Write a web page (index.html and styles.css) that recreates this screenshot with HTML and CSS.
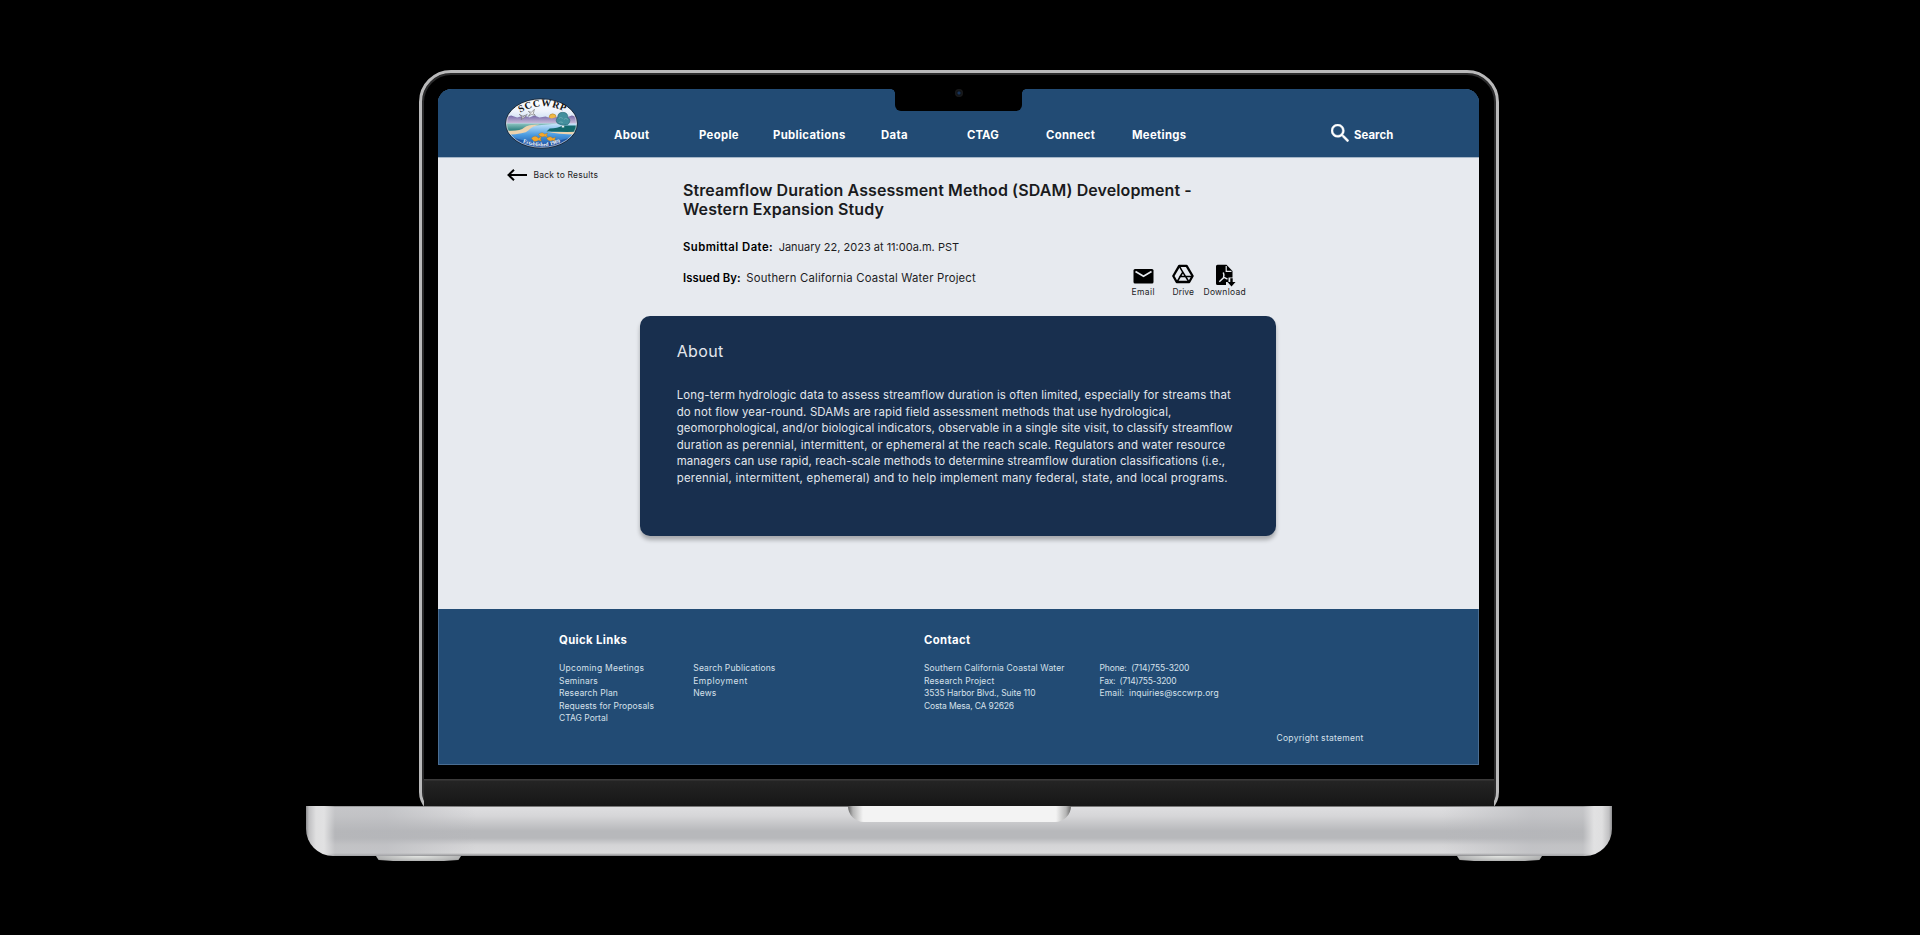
FILE: index.html
```html
<!DOCTYPE html>
<html lang="en">
<head>
<meta charset="utf-8">
<title>SCCWRP – Streamflow Duration Assessment Method</title>
<link rel="stylesheet" href="styles.css">
</head>
<body>
<div class="laptop">
  <div class="lid">
    <div class="screen">
      <div class="notch"><span class="camera"></span></div>
      <header class="site-header">
        <svg class="logo" viewBox="0 0 72 50" width="73" height="51">
          <defs>
            <clipPath id="oval"><ellipse cx="36" cy="25" rx="35" ry="24"/></clipPath>
            <linearGradient id="sky" x1="0" y1="0" x2="0" y2="1"><stop offset="0" stop-color="#fff"/><stop offset=".5" stop-color="#eef3fb"/><stop offset="1" stop-color="#b9d2ee"/></linearGradient>
            <linearGradient id="hills" x1="0" y1="0" x2="0" y2="1"><stop offset="0" stop-color="#7468a6"/><stop offset="1" stop-color="#d6c9e2"/></linearGradient>
            <linearGradient id="shore" x1="0" y1="0" x2="0" y2="1"><stop offset="0" stop-color="#8cc4bf"/><stop offset="1" stop-color="#0e6a6c"/></linearGradient>
            <linearGradient id="water" x1="0" y1="0" x2="0" y2="1"><stop offset="0" stop-color="#c9e6fa"/><stop offset=".45" stop-color="#4a9be0"/><stop offset="1" stop-color="#10439b"/></linearGradient>
            <path id="arcTop" d="M15 14.500 Q37 1 62 15"/>
            <path id="arcBottom" d="M17.500 43.500 Q36 51.500 56 43"/>
          </defs>
          <g clip-path="url(#oval)">
            <rect width="72" height="26" fill="url(#sky)"/>
            <circle cx="47" cy="19" r="3.500" fill="#f0b845" stroke="#a9802c" stroke-width=".5"/>
            <path d="M0 19 L6 17 12 19 19 17 24 19 29 17 34 19 40 18 46 20 53 18 60 19 66 17 72 19 V26 H0Z" fill="url(#hills)"/>
            <rect y="25" width="72" height="25" fill="url(#water)"/>
            <path d="M0 25 H52 L31 27 Q24 28 20 31 Q16 34 0 34Z" fill="url(#shore)"/>
            <path d="M0 32 Q15 33 19 29 Q22 26 34 26 Q26 28 23 32 Q19 36 0 36Z" fill="#ecd2ad"/>
            <path d="M72 27 H57 Q52 30 44 30 L41 33 Q52 33 72 34Z" fill="#12686c"/>
            <path d="M41 33 Q50 34 72 33 V36 Q52 36 41 33Z" fill="#ecd2ad"/>
            <path d="M56 24 H58.400 V29 H56Z" fill="#e4eef0"/>
            <path d="M52 25 Q49 22 52 19 Q52 14 57 14 Q62 14 62 19 Q66 22 62 26 Q57 28 52 25Z" fill="#438f9d" stroke="#276876" stroke-width=".6"/>
            <path d="M53 20q2-2 4 0m1 1q2-2 4 0m-9 3q2-1 4 0" stroke="#78b2b9" stroke-width=".7" fill="none"/>
            <path d="M14 16 L18 18 22 16 19 19 16 21 17 18.500Z M23 13 L26 14 29 11 28 15 30 17 26 16 23 18 25 15Z" fill="#eee" stroke="#555" stroke-width=".5"/>
            <path d="M0 36 Q14 42 36 45 Q58 42 72 36 V50 H0Z" fill="#0f3d86" opacity=".55"/>
            <g fill="#f3a72b" stroke="#a86d13" stroke-width=".3">
              <path d="M26 39.500 q4-4 7 0 l3-2 -1 3 1 2 -3-1 q-4 3-7-2Z"/>
              <path d="M33 35.500 q4-3 6 0 l3-1 -1 2 1 2 -3-1 q-4 2-6-2Z"/>
              <path d="M41 39.500 q4-3 6 0 l3-1 -1 2 1 2 -3-1 q-4 2-6-2Z"/>
            </g>
          </g>
          <ellipse cx="36" cy="25" rx="35.300" ry="24.300" fill="none" stroke="#1b2430" stroke-width=".9"/>
          <ellipse cx="36" cy="25" rx="34.500" ry="23.500" fill="none" stroke="#e9ecef" stroke-width=".6"/>
          <text class="logo-name"><textPath href="#arcTop">SCCWRP</textPath></text>
          <text class="logo-year"><textPath href="#arcBottom">Established 1969</textPath></text>
        </svg>
        <nav class="nav">
          <a>About</a><a>People</a><a>Publications</a><a>Data</a><a class="ls-1">CTAG</a><a>Connect</a><a>Meetings</a>
        </nav>
        <div class="search">
          <svg viewBox="3 3 17.500 17.500" width="18" height="18"><path fill="#fff" stroke="#fff" stroke-width=".4" d="M15.500 14h-.79l-.28-.27A6.471 6.471 0 0 0 16 9.500 6.500 6.500 0 1 0 9.500 16c1.610 0 3.090-.59 4.230-1.570l.27.28v.79l5 4.990L20.490 19l-4.990-5zm-6 0C7.010 14 5 11.990 5 9.500S7.010 5 9.500 5 14 7.010 14 9.500 11.990 14 9.500 14z"/></svg>
          <span>Search</span>
        </div>
      </header>

      <main class="main">
        <a class="back">
          <svg viewBox="0 0 20 12" width="20" height="12"><path d="M20 6H2M7 .8 1.500 6 7 11.200" fill="none" stroke="#000" stroke-width="2"/></svg>
          <span class="ls-2">Back to Results</span>
        </a>
        <article>
          <div class="intro">
            <h1><span class="title-line">Streamflow Duration Assessment Method (SDAM) Development -</span><span class="title-line">Western Expansion Study</span></h1>
            <div class="intro-row">
              <dl class="meta">
                <div><dt class="ls-5">Submittal Date:</dt><dd class="date">January 22, 2023 at 11:00a.m. PST</dd></div>
                <div><dt class="ls-1">Issued By:</dt><dd class="ls-2">Southern California Coastal Water Project</dd></div>
              </dl>
              <div class="actions">
                <div class="action">
                  <svg viewBox="0 0 21 23" width="21" height="23"><rect x=".5" y="5" width="20" height="14.500" rx="1.500"/><path d="M2.500 7.500 10.500 12.300 18.500 7.500" fill="none" stroke="#e7eaef" stroke-width="1.700"/></svg>
                  <span class="ls-4">Email</span>
                </div>
                <div class="action">
                  <svg viewBox="0 0 22 23" width="22" height="23" fill="none" stroke="#000"><path d="M7.200 1.800h7.400l6 10.200-3.400 6H4.700l-3.400-6z" stroke-width="2.300" stroke-linejoin="round"/><path d="M7.200 2 10.800 8.200 5 18M10.800 8.200 13.500 12.400H20.500M10.800 8.200 8 12.600H13.600L17 18" stroke-width="1.500"/></svg>
                  <span class="ls-1">Drive</span>
                </div>
                <div class="action">
                  <svg viewBox="0 0 21 23" width="21" height="23"><path d="M2.500.8H11.500L17.500 7V13.500H13.500V18H11V21H2.500Q1 21 1 19.500V2.300Q1 .8 2.500.8Z"/><path d="M11.200 2V7.300H16.500" fill="none" stroke="#e7eaef" stroke-width="1.200"/><path d="M8.300 8.500Q9.600 11.500 8.500 13.700L4.300 17.700M8.500 13.200 12.500 15.200" fill="none" stroke="#e7eaef" stroke-width="1.500"/><path d="M15.300 14.300H17.700V18H20.500L16.500 22.500 12.500 18H15.300Z"/></svg>
                  <span class="ls-3">Download</span>
                </div>
              </div>
            </div>
          </div>
          <section class="card">
            <h2>About</h2>
            <p><span class="line ls-a">Long-term hydrologic data to assess streamflow duration is often limited, especially for streams that </span><span class="line ls-b">do not flow year-round. SDAMs are rapid field assessment methods that use hydrological, </span><span class="line ls-1">geomorphological, and/or biological indicators, observable in a single site visit, to classify streamflow </span><span class="line ls-2">duration as perennial, intermittent, or ephemeral at the reach scale. Regulators and water resource </span><span class="line ls-1">managers can use rapid, reach-scale methods to determine streamflow duration classifications (i.e., </span><span class="line ls-c">perennial, intermittent, ephemeral) and to help implement many federal, state, and local programs.</span></p>
          </section>
        </article>
      </main>

      <footer class="footer">
        <div class="footer-groups">
          <section>
            <h3>Quick Links</h3>
            <div class="links">
              <ul><li class="ls-3">Upcoming Meetings</li><li class="ls-2">Seminars</li><li class="ls-b">Research Plan</li><li class="ls-1">Requests for Proposals</li><li>CTAG Portal</li></ul>
              <ul><li class="ls-b">Search Publications</li><li class="ls-5">Employment</li><li class="ls-1">News</li></ul>
            </div>
          </section>
          <section>
            <h3>Contact</h3>
            <div class="contact">
              <ul><li class="ls-b">Southern California Coastal Water</li><li class="ls-b">Research Project</li><li class="ls-n1">3535 Harbor Blvd., Suite 110</li><li class="ls-n2">Costa Mesa, CA 92626</li></ul>
              <ul><li class="ls-n2">Phone: &nbsp;(714)755-3200</li><li class="ls-n3">Fax: &nbsp;(714)755-3200</li><li class="ls-1">Email: &nbsp;inquiries@sccwrp.org</li></ul>
            </div>
          </section>
        </div>
        <p class="copyright ls-3">Copyright statement</p>
      </footer>
    </div>
    <div class="chin"></div>
  </div>
  <div class="base"><div class="thumb"></div></div>
  <div class="feet"><span class="foot"></span><span class="foot"></span></div>
</div>
</body>
</html>
```
FILE: styles.css
```css
* { box-sizing: border-box; margin: 0; padding: 0; }
body { background: #000; font-family: Inter, "Open Sans", sans-serif; color: #1c1c1e; height: 935px; overflow: hidden; }
ul { list-style: none; }

/* Laptop */
.laptop { width: 1306px; margin: 0 0 0 306px; padding-top: 70px; }
.lid { width: 1080px; height: 746px; margin-left: 113px; padding: 16px 16px 0; background: #000; border: 3px solid #b9b9ba; border-radius: 32px 32px 24px 24px; box-shadow: inset 0 0 0 2px #2b2b2c; }
.screen { position: relative; width: 1041px; height: 676px; border-radius: 14px 14px 0 0; overflow: hidden; box-shadow: inset 0 0 0 1px #4a6d92; background: #224b74; }
.notch { position: absolute; left: 457px; top: 0; width: 127px; height: 22px; background: #000; border-radius: 0 0 6px 6px; }
.notch::before, .notch::after { content: ""; position: absolute; top: 0; width: 4px; height: 4px; }
.notch::before { left: -4px; background: radial-gradient(circle at 0 100%, transparent 3.5px, #000 4px); }
.notch::after { right: -4px; background: radial-gradient(circle at 100% 100%, transparent 3.5px, #000 4px); }
.camera { position: absolute; left: 59.5px; top: 0; width: 8px; height: 8px; border-radius: 50%; background: radial-gradient(circle, #17335a 0 1px, #101419 2px, #1b1b1c 4px); }
.chin { height: 27px; margin: 14px -14px 0; background: linear-gradient(#3b3a3a 0 1px, #242424 2px, #161616); }
.base { position: relative; width: 1306px; height: 50px; margin-top: -10px; border-radius: 0 0 27px 27px; background:
  linear-gradient(90deg, #8c8c8e 0, #c0c0c2 3px, #dfdfe0 10px, #e1e1e2 18px, #b5b6b999 29px, #b4b5b999 80px, #b4b5b900 170px, #b4b5b900 1136px, #b4b5b999 1226px, #b5b6b999 1277px, #e1e1e2 1288px, #dfdfe0 1296px, #c0c0c2 1303px, #8c8c8e 1306px),
  linear-gradient(#777 0 .6px, #dedee0 1.5px, #d6d6d8 10px, #b7b8bb 25px, #b7b8bb 32px, #d4d4d6 39px, #dadadb 47px, #858587 50px); }
.thumb { width: 223px; height: 15.5px; margin: 0 auto; border-radius: 0 0 16px 16px; background: linear-gradient(90deg, #666 0, #b5b5b5 5px, #f3f3f3 15px, #f3f3f3 208px, #b5b5b5 218px, #666 223px); }
.feet { display: flex; justify-content: space-between; padding: 0 70px; }
.foot { width: 85px; height: 5px; background: radial-gradient(ellipse at 50% 0, #e4e6e3, #b0b1b1 75%, #888); clip-path: polygon(0 0, 100% 0, 97% 80%, 80% 100%, 20% 100%, 3% 80%); }

/* Header */
.site-header { display: flex; height: 69px; padding-left: 67px; border-bottom: 1px solid #a5b6c8; background: #224b74; color: #fff; font-weight: 700; font-size: 11.3px; line-height: 16px; letter-spacing: .35px; }
.logo { margin-top: 8.5px; flex: none; }
.logo-name { font: 700 9.8px "Liberation Serif", serif; fill: #151515; letter-spacing: .7px; }
.logo-year { font: 700 5.2px "Liberation Serif", serif; fill: #fff; letter-spacing: .05px; }
.nav { display: grid; grid-template-columns: 85px 74px 108px 86px 79px 86px 80px; margin: 38px 0 0 36px; }
.search { display: flex; gap: 5px; margin: 35px 0 0 119px; letter-spacing: .1px; }
.search span { padding-top: 3px; }

/* Content */
.main { display: grid; grid-template-columns: 202px 636px; height: 451px; background: #e7eaef; }
.back { display: flex; gap: 6.5px; align-items: center; height: 14px; margin: 9.500px 0 0 69px; font-size: 8.5px; line-height: 14px; }
.intro { height: 158.3px; padding: 22.8px 0 0 43px; }
h1 { font-size: 16px; font-weight: 600; line-height: 19.3px; letter-spacing: .09px; color: #1a1b1d; }
.title-line { display: block; }
.intro-row { display: flex; justify-content: space-between; padding-right: 30.5px; }
.meta { padding-top: 19.6px; font-size: 11.3px; line-height: 16px; }
.meta div { display: flex; gap: 5.5px; margin-bottom: 15px; }
.meta dt { font-weight: 600; color: #000; }
.meta .date { font-size: 11px; }
.actions { display: grid; grid-template-columns: 41px 31px 42px; margin-top: 44.400px; font-size: 8.5px; line-height: 10px; white-space: nowrap; }
.action svg { display: block; margin-left: -1px; }
.action span { position: relative; top: .6px; }
.action:first-child svg { margin-left: 1px; }
.action:last-child svg { margin-left: 11px; }
.card { height: 219.3px; padding: 24.5px 36.700px 0; border-radius: 10px; background: #182f4e; color: #e3e7ed; box-shadow: 0 4px 4px rgba(0, 0, 0, .28); }
.card h2 { font-size: 16px; font-weight: 400; line-height: 20px; letter-spacing: .35px; }
.card p { margin-top: 26.3px; font-size: 11.4px; line-height: 16.53px; white-space: nowrap; }
.line { display: block; }

/* Footer */
.footer { height: 156px; padding: 23px 0 0 121px; color: #d6e0ea; font-size: 8.5px; line-height: 12.4px; white-space: nowrap; }
.footer-groups { display: flex; height: 99.5px; }
.footer-groups section { width: 365px; }
.footer h3 { margin-bottom: 14.3px; color: #fff; font-size: 11.3px; line-height: 16px; letter-spacing: .38px; }
.links { display: grid; grid-template-columns: 134.3px 1fr; }
.contact { display: grid; grid-template-columns: 175.6px 1fr; }
.copyright { padding-left: 717.5px; }

/* Letter spacing steps */
.ls-n3 { letter-spacing: -.25px; }
.ls-n2 { letter-spacing: -.15px; }
.ls-n1 { letter-spacing: -.06px; }
.ls-1, .nav .ls-1 { letter-spacing: .1px; }
.ls-a { letter-spacing: .16px; }
.ls-b { letter-spacing: .138px; }
.ls-c { letter-spacing: .244px; }
.ls-2 { letter-spacing: .2px; }
.ls-3 { letter-spacing: .27px; }
.ls-4 { letter-spacing: .4px; }
.ls-5 { letter-spacing: .46px; }
```
